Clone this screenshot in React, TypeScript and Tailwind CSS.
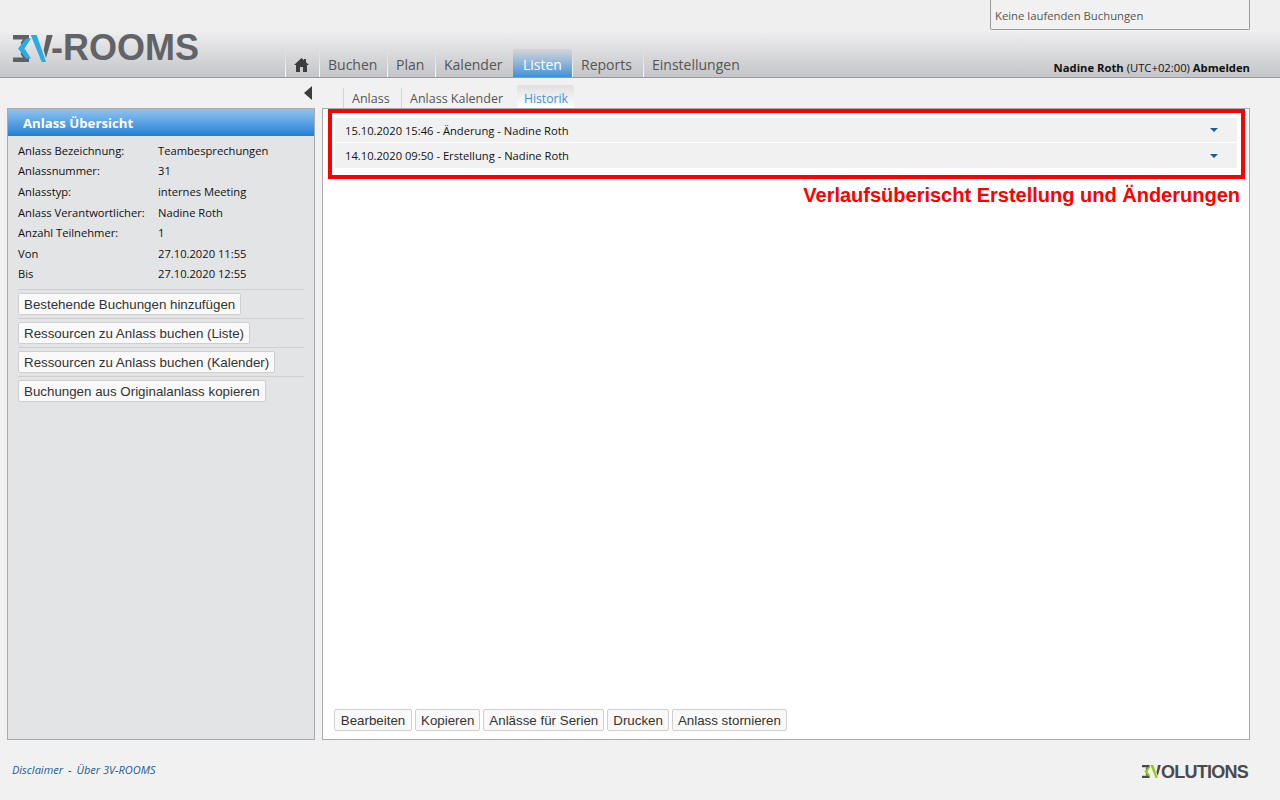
const segoe = "font-['Open_Sans',sans-serif]";

const details = [
    ['Anlass Bezeichnung:', 'Teambesprechungen'],
    ['Anlassnummer:', '31'],
    ['Anlasstyp:', 'internes Meeting'],
    ['Anlass Verantwortlicher:', 'Nadine Roth'],
    ['Anzahl Teilnehmer:', '1'],
    ['Von', '27.10.2020 11:55'],
    ['Bis', '27.10.2020 12:55'],
];

const sideActions = [
    'Bestehende Buchungen hinzufügen',
    'Ressourcen zu Anlass buchen (Liste)',
    'Ressourcen zu Anlass buchen (Kalender)',
    'Buchungen aus Originalanlass kopieren',
];

const footerActions = ['Kopieren', 'Anlässe für Serien', 'Drucken', 'Anlass stornieren'];

function ActionButton({ label, width = '' }: { label: string; width?: string }) {
    return (
        <button
            className={`h-[22px] rounded-[2px] border border-[#cfcfcf] bg-[#f9f9f9] px-[5px] pt-px font-['Liberation_Sans',sans-serif] text-[13.333px] leading-[20px] whitespace-nowrap text-[#333] ${width}`}
        >
            {label}
        </button>
    );
}

function NavTab({ label, width, active }: { label: string; width: string; active?: boolean }) {
    return (
        <div
            className={`flex h-[28px] items-center bg-no-repeat pt-[3px] text-[14px] ${width} ${active ? 'bg-gradient-to-b from-[#d6d6d8] to-[#3a92d8] pl-[10px] text-white' : 'bg-[linear-gradient(to_bottom,transparent,#ffffff)] bg-[length:1px_100%] pl-[9px] text-[#555]'}`}
        >
            {label}
        </div>
    );
}

function SubTab({ label, width, active }: { label: string; width: string; active?: boolean }) {
    return (
        <div
            className={`flex items-center ${width} ${active ? 'h-[23px] rounded-t-[2px] bg-gradient-to-b from-[#e0e0e0] to-white pt-[6px] pl-[7px] text-[12.2px] text-[#3a92d8]' : 'h-[20px] border-l border-l-[#d4d4d4] pt-[2px] pl-[8px] text-[12.5px] text-[#555]'}`}
        >
            {label}
        </div>
    );
}

function HistoryRow({ label, height }: { label: string; height: string }) {
    return (
        <div className={`flex items-center justify-between bg-[#f1f1f1] pt-[2px] pr-[19px] pl-[10px] text-[11.2px] text-[#111] ${height}`}>
            <span>{label}</span>
            <span className="mb-[2px] h-0 w-0 border-x-[4px] border-t-[4px] border-x-transparent border-t-[#1b5a94]" />
        </div>
    );
}

// the 3V mark, shared by the product logo and the company logo
function Mark({ width, height, grey, accent }: { width: number; height: number; grey: string; accent: string }) {
    return (
        <svg width={width} height={height} viewBox="0 0 40 27" className="shrink-0">
            <path d="M0 0H16V4.500L10 11L7.500 8L10 4.500H0Z" fill={grey} />
            <path d="M0 27H16V22.500L10 16L7.500 19L10 22.500H0Z" fill={grey} />
            <path d="M5 13.500L13 3.500H18L11.500 13.500L18 23.500H13Z" fill={accent} />
            <path d="M17.700 0H23.700L33 27H28.700Z" fill={accent} />
            <path d="M33.700 0H39.700L33 23L30.700 15Z" fill={grey} />
        </svg>
    );
}

function Logo() {
    return (
        <div className="flex items-center">
            <Mark width={40} height={27} grey="#5f6063" accent="#27ace3" />
            <span className="-mt-px ml-[-2px] font-['Liberation_Sans',sans-serif] text-[36px] leading-none font-bold text-[#626366]">
                -ROOMS
            </span>
        </div>
    );
}

function SmallLogo() {
    return (
        <div className="mt-[3px] flex items-center">
            <Mark width={19} height={13} grey="#4a4a4c" accent="#93c90e" />
            <span className="font-['Liberation_Sans',sans-serif] text-[18px] leading-none font-bold tracking-[-0.75px] text-[#4a4a4c]">
                OLUTIONS
            </span>
        </div>
    );
}

export default function App() {
    return (
        <div className={`relative flex h-[800px] w-[1280px] flex-col overflow-hidden bg-[#f1f1f1] ${segoe}`}>
            {/* HEADER */}
            <header className="flex h-[78px] shrink-0 items-end justify-between border-b border-b-[#9a9a9c] bg-gradient-to-b from-[#efeff0] from-40% to-[#c4c5c8] pr-[30px]">
                <div className="flex items-end">
                    <div className="mb-[11px] ml-[13px] w-[272px]">
                        <Logo />
                    </div>
                    <nav className="flex items-end">
                        <div className="flex h-[28px] w-[34px] items-center justify-center bg-[linear-gradient(to_bottom,transparent,#ffffff)] bg-[length:1px_100%] bg-no-repeat pt-[3px] pr-[2px]">
                            <svg width="15" height="14" viewBox="0 0 15 14">
                                <path d="M7.500 0L0 7h2v7h4V9h3v5h4V7h2l-3-2.800V1h-2v1.300z" fill="#3c3c3e" />
                            </svg>
                        </div>
                        <NavTab label="Buchen" width="w-[68px]" />
                        <NavTab label="Plan" width="w-[48px]" />
                        <NavTab label="Kalender" width="w-[78px]" />
                        <NavTab label="Listen" width="w-[59px]" active />
                        <NavTab label="Reports" width="w-[71px]" />
                        <NavTab label="Einstellungen" width="w-[110px]" />
                    </nav>
                </div>
                <div className="text-[11.25px] leading-[18px] text-[#111]">
                    <span className="font-bold">Nadine Roth</span> (UTC+02:00) <span className="font-bold">Abmelden</span>
                </div>
            </header>

            {/* RUNNING BOOKINGS */}
            <div className="absolute top-0 right-[30px] flex h-[30px] w-[260px] items-end rounded-b-[2px] border border-t-0 border-[#9a9a9c] bg-[#f1f1f1] px-[4px] pb-[6px] text-[11.3px] leading-[15px] text-[#555]">
                Keine laufenden Buchungen
            </div>

            <main className="flex min-h-0 flex-1 gap-[7px] pr-[30px] pl-[7px]">
                {/* SIDEBAR */}
                <div className="flex w-[308px] shrink-0 flex-col">
                    <div className="flex h-[30px] items-center justify-end pr-[3px]">
                        <span className="h-0 w-0 border-y-[7px] border-r-[8px] border-y-transparent border-r-[#3c3c3e]" />
                    </div>
                    <aside className="h-[632px] border border-[#aaaaad] bg-[#e3e4e6]">
                        <div className="flex h-[27px] items-center bg-gradient-to-b from-[#8fc3f0] to-[#1a80d4] pt-[3px] pl-[15px] text-[13.2px] font-bold text-white">
                            Anlass Übersicht
                        </div>
                        <div className="px-[10px] pt-[5px]">
                            {details.map(([k, v]) => (
                                <div key={k} className="flex h-[20.6px] items-center text-[11.2px] text-[#111]">
                                    <span className="w-[140px] shrink-0">{k}</span>
                                    <span>{v}</span>
                                </div>
                            ))}
                            <div className="mt-[4px]">
                                {sideActions.map((a) => (
                                    <div key={a} className="flex h-[29px] items-center border-t border-t-[#cfcfd0]">
                                        <ActionButton label={a} />
                                    </div>
                                ))}
                            </div>
                        </div>
                    </aside>
                </div>

                {/* CONTENT */}
                <div className="flex min-w-0 flex-1 flex-col">
                    <div className="flex h-[30px] items-end pl-[21px]">
                        <SubTab label="Anlass" width="w-[58px]" />
                        <SubTab label="Anlass Kalender" width="w-[116px]" />
                        <SubTab label="Historik" width="w-[57px]" active />
                    </div>
                    <section className="relative flex h-[632px] flex-col justify-between border border-[#aaaaad] bg-white">
                        <div className="px-[12px] pt-[9px]">
                            <HistoryRow label="15.10.2020 15:46 - Änderung - Nadine Roth" height="h-[24px]" />
                            <div className="mt-px">
                                <HistoryRow label="14.10.2020 09:50 - Erstellung - Nadine Roth" height="h-[25px]" />
                            </div>
                        </div>
                        <div className="flex gap-[3px] pb-[8px] pl-[11px]">
                            <ActionButton label="Bearbeiten" width="w-[78px]" />
                            {footerActions.map((a) => (
                                <ActionButton key={a} label={a} />
                            ))}
                        </div>

                        {/* ANNOTATION */}
                        <div className="absolute top-0 left-[5px] h-[70px] w-[917px] border-[4px] border-[#fe0000]" />
                        <div className="absolute top-[74px] right-[9px] font-['Liberation_Sans',sans-serif] text-[20px] leading-[24px] font-bold text-[#fe0000]">
                            Verlaufsüberischt Erstellung und Änderungen
                        </div>
                    </section>
                </div>
            </main>

            {/* FOOTER */}
            <footer className="flex h-[60px] shrink-0 items-center justify-between pr-[32px] pl-[12px]">
                <div className="text-[11px] text-[#1a5c96] italic">
                    <span>Disclaimer</span>
                    <span className="mx-[5px]">-</span>
                    <span>Über 3V-ROOMS</span>
                </div>
                <SmallLogo />
            </footer>
        </div>
    );
}
